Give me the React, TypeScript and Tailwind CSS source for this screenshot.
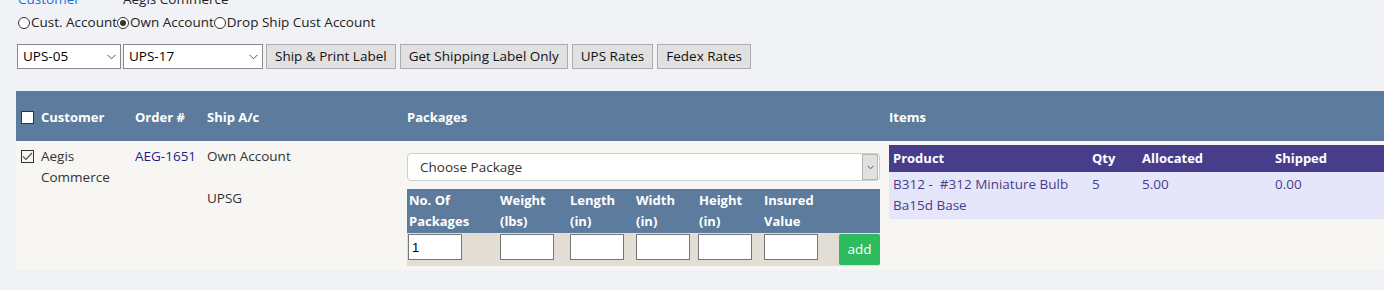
import React from "react";

const F = { fontFamily: '"Open Sans", "Noto Sans", sans-serif' };

function Radio({ checked, label }: { checked?: boolean; label: string }) {
  return (
    <span className="flex items-center">
      <span className="w-[12px] h-[12px] rounded-full border border-[#333] bg-white flex items-center justify-center mr-[1px]">
        {checked && <span className="w-[6px] h-[6px] rounded-full bg-[#333]" />}
      </span>
      <span>{label}</span>
    </span>
  );
}

function Chevron() {
  return (
    <svg width="9" height="6" viewBox="0 0 9 6" fill="none">
      <path d="M0.5 0.8 L4.5 4.8 L8.5 0.8" stroke="#555" strokeWidth="1" />
    </svg>
  );
}

function Select({ w, text }: { w: string; text: string }) {
  return (
    <div className={`${w} h-[25px] border border-[#8a8a8a] bg-white flex items-center justify-between pl-[5px] pr-[4px] text-[#000]`}>
      <span>{text}</span>
      <Chevron />
    </div>
  );
}

function Btn({ children }: { children: React.ReactNode }) {
  return (
    <div className="h-[25px] px-[8px] border border-[#adadad] bg-[#e1e1e1] flex items-center text-[#111]">{children}</div>
  );
}

function Input({ value }: { value?: string }) {
  return (
    <div
      className="w-[54px] h-[26px] border border-[#767676] bg-white flex items-center pl-[3px] text-[13px] text-black"
      style={{ fontFamily: '"Liberation Sans", Arial, sans-serif' }}
    >
      {value}
    </div>
  );
}

export default function App() {
  return (
    <div className="w-[1384px] h-[290px] bg-[#f1f2f6] text-[13.5px] text-[#222] overflow-hidden leading-[21px]" style={F}>
      <div className="-mt-[11px] flex h-[21px]">
        <span className="ml-[18px] w-[105px] text-[#1e6fd9]">Customer</span>
        <span className="text-[#222]">Aegis Commerce</span>
      </div>
      <div className="mt-[2px] flex h-[21px] pl-[18px] text-[#222]">
        <Radio label="Cust. Account" />
        <Radio checked label="Own Account" />
        <Radio label="Drop Ship Cust Account" />
      </div>
      <div className="flex mt-[11px] ml-[17px] gap-[2px]">
        <Select w="w-[104px]" text="UPS-05" />
        <Select w="w-[140px]" text="UPS-17" />
        <div className="flex gap-[4px] ml-[1px]">
          <Btn>Ship &amp; Print Label</Btn>
          <Btn>Get Shipping Label Only</Btn>
          <Btn>UPS Rates</Btn>
          <Btn>Fedex Rates</Btn>
        </div>
      </div>

      <div className="mt-[22px] ml-[16px]">
        <div className="h-[50px] bg-[#5d7b9d] text-white font-bold text-[13px] flex items-center pt-[2px]">
          <div className="w-[25px] pl-[5px] flex items-center">
            <span className="w-[13px] h-[13px] bg-white border border-[#333]" />
          </div>
          <div className="w-[94px]">Customer</div>
          <div className="w-[72px]">Order #</div>
          <div className="w-[200px]">Ship A/c</div>
          <div className="w-[482px]">Packages</div>
          <div className="flex-1">Items</div>
        </div>
        <div className="h-[129px] bg-[#f7f6f3] flex text-[#333]">
          <div className="w-[25px] pl-[5px] pt-[9px]">
            <span className="w-[13px] h-[13px] border border-[#333] flex items-center justify-center">
              <svg width="11" height="9" viewBox="0 0 11 9" fill="none">
                <path d="M1 4.5 L4 7.5 L10 1" stroke="#555" strokeWidth="1.2" />
              </svg>
            </span>
          </div>
          <div className="w-[94px] pt-[5px]">
            <div>Aegis</div>
            <div>Commerce</div>
          </div>
          <div className="w-[72px] pt-[5px] text-[#1c1c8c]">AEG-1651</div>
          <div className="w-[200px] pt-[5px]">
            <div>Own Account</div>
            <div className="mt-[21px]">UPSG</div>
          </div>
          <div className="w-[482px] pt-[12px] pr-[9px]">
            <div className="h-[28px] border border-[#cfcfcf] rounded-[4px] bg-white flex items-center justify-between pl-[12px] pr-[1px] text-[#333]">
              <span>Choose Package</span>
              <span className="w-[16px] h-[26px] bg-[#e1e1e1] border border-[#b5b5b5] flex items-center justify-center">
                <svg width="7" height="5" viewBox="0 0 7 5" fill="none">
                  <path d="M0.5 0.8 L3.5 3.8 L6.5 0.8" stroke="#555" strokeWidth="1" />
                </svg>
              </span>
            </div>
            <div className="mt-[8px] h-[44px] bg-[#5d7b9d] text-white font-bold text-[13px] flex pt-[1px]">
              <div className="w-[93px] pl-[2px]">No. Of<br />Packages</div>
              <div className="w-[70px]">Weight<br />(lbs)</div>
              <div className="w-[66px]">Length<br />(in)</div>
              <div className="w-[63px]">Width<br />(in)</div>
              <div className="w-[65px]">Height<br />(in)</div>
              <div className="flex-1">Insured<br />Value</div>
            </div>
            <div className="h-[33px] bg-[#e2ded6] flex pt-[1px]">
              <div className="w-[93px] pl-[1px]"><Input value="1" /></div>
              <div className="w-[70px]"><Input /></div>
              <div className="w-[66px]"><Input /></div>
              <div className="w-[62px]"><Input /></div>
              <div className="w-[66px]"><Input /></div>
              <div className="w-[75px]"><Input /></div>
              <div className="w-[41px] h-[31px] bg-[#2dbb5d] rounded-[2px] text-white flex items-center justify-center">add</div>
            </div>
          </div>
          <div className="flex-1 pt-[4px]">
            <div className="h-[27px] bg-[#483d8b] text-white font-bold text-[13px] flex items-center pl-[4px]">
              <div className="w-[199px]">Product</div>
              <div className="w-[50px]">Qty</div>
              <div className="w-[133px]">Allocated</div>
              <div>Shipped</div>
            </div>
            <div className="h-[47px] bg-[#e6e6fa] flex pl-[4px] pt-[2px] text-[#483d8b]">
              <div className="w-[199px]">
                <div className="whitespace-pre">B312 -  #312 Miniature Bulb</div>
                <div>Ba15d Base</div>
              </div>
              <div className="w-[50px]">5</div>
              <div className="w-[133px]">5.00</div>
              <div>0.00</div>
            </div>
          </div>
        </div>
      </div>
    </div>
  );
}
